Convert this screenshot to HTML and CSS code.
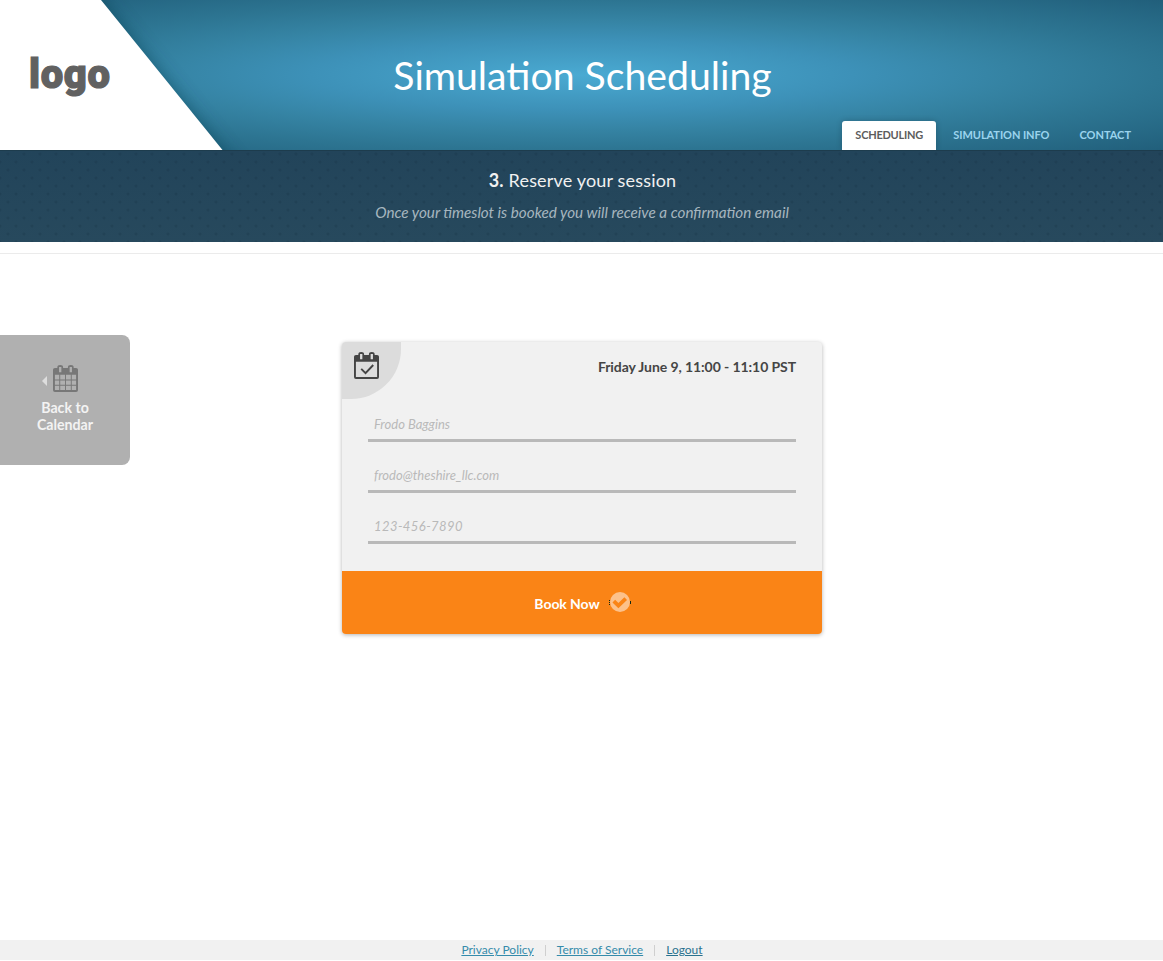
FILE: index.html
```html
<!DOCTYPE html>
<html lang="en">
<head>
<meta charset="utf-8">
<title>Simulation Scheduling</title>
<link rel="stylesheet" href="styles.css">
</head>
<body>
<header class="header">
  <svg class="logo" width="260" height="150" viewBox="0 0 260 150">
    <defs><filter id="shade" x="-20%" y="-20%" width="140%" height="140%"><feGaussianBlur stdDeviation="9"/></filter></defs>
    <path class="logo-shadow" filter="url(#shade)" d="M-40-48H62L258 194H-40z"/>
    <path fill="#fff" d="M0 0H101L222.500 150H0z"/>
    <text class="logo-text" x="29" y="87.500" textLength="81">logo</text>
  </svg>
  <h1 class="title">Simulation Scheduling</h1>
  <nav class="tabs">
    <a class="tab tab-active">SCHEDULING</a>
    <a class="tab tab-info">SIMULATION INFO</a>
    <a class="tab">CONTACT</a>
  </nav>
</header>
<section class="step">
  <h2 class="step-title"><b>3.</b> Reserve your session</h2>
  <p class="step-note">Once your timeslot is booked you will receive a confirmation email</p>
</section>
<main class="main">
  <a class="back">
    <span class="back-icons">
      <svg width="5" height="10" viewBox="0 0 5 10"><path fill="#ddd" d="M5 0v10L0 5z"/></svg>
      <svg width="25" height="27" viewBox="0 0 26 28" preserveAspectRatio="none"><path fill="#777" fill-rule="evenodd" d="M2 3H4.500V2.500Q4.500 0 7.500 0T10.500 2.500V3H15.500V2.500Q15.500 0 18.500 0T21.500 2.500V3H24Q26 3 26 5V26Q26 28 24 28H2Q0 28 0 26V5Q0 3 2 3zM6.300 2V7.500H8.700V2zM17.300 2V7.500H19.700V2zM2 10V15H6.500V10zM7.500 10V15H12.500V10zM13.500 10V15H18.500V10zM19.500 10V15H24V10zM2 16V20.500H6.500V16zM7.500 16V20.500H12.500V16zM13.500 16V20.500H18.500V16zM19.500 16V20.500H24V16zM2 21.500V26H6.500V21.500zM7.500 21.500V26H12.500V21.500zM13.500 21.500V26H18.500V21.500zM19.500 21.500V26H24V21.500z"/></svg>
    </span>
    <span class="back-label">Back to<br>Calendar</span>
  </a>
  <form class="card">
    <div class="card-head">
      <div class="corner">
        <svg width="25" height="27" viewBox="0 0 26 28" preserveAspectRatio="none"><path fill="#444" fill-rule="evenodd" d="M2 3H4.500V2.500Q4.500 0 7.500 0T10.500 2.500V3H15.500V2.500Q15.500 0 18.500 0T21.500 2.500V3H24Q26 3 26 5V26Q26 28 24 28H2Q0 28 0 26V5Q0 3 2 3zM6.300 2V7.500H8.700V2zM17.300 2V7.500H19.700V2zM2 10V26H24V10z"/><path d="M7.500 17.500L12 22L20 13.500" fill="none" stroke="#444" stroke-width="2"/></svg>
      </div>
      <strong class="slot">Friday June 9, 11:00 - 11:10 PST</strong>
    </div>
    <div class="fields">
      <input class="field" type="text" placeholder="Frodo Baggins">
      <input class="field" type="text" placeholder="frodo@theshire_llc.com">
      <input class="field field-phone" type="text" placeholder="123-456-7890">
    </div>
    <button class="book" type="button"><span>Book Now</span>
      <svg class="book-icon" width="22" height="20" viewBox="0 0 22 20"><circle cx="11" cy="10" r="10" fill="#fcc18b"/><path d="M4.800 9.200L9.400 13.700L16.700 6.700" fill="none" stroke="#fa8416" stroke-width="3.800"/><path d="M0 8h1v1H0zM0 10h1v1H0zM0 12h1v1H0zM21 9h1v3h-1z" fill="#152b14"/></svg>
    </button>
  </form>
</main>
<footer class="footer">
  <a class="link">Privacy Policy</a><i class="sep"></i><a class="link">Terms of Service</a><i class="sep"></i><a class="link link-out">Logout</a>
</footer>
</body>
</html>
```
FILE: styles.css
```css
* { box-sizing: border-box; }
body { margin: 0; height: 961px; display: flex; flex-direction: column; background: #fff; font-family: Lato, sans-serif; overflow: hidden; }
.header { position: relative; height: 150px; flex: none; display: flex; justify-content: center; overflow: hidden; background: radial-gradient(ellipse farthest-corner at center, #4aaad2 0%, #3d91b8 33%, #3583a3 52%, #2d7592 70%, #215f7b 100%); }
.logo { position: absolute; left: 0; top: 0; }
.logo-shadow { fill: #0d3a4b; opacity: .55; }
.logo-text { font: 900 40px Roboto, sans-serif; fill: #616161; stroke: #616161; stroke-width: 1.2px; }
.title { margin: 50px 0 0 2px; font-size: 39.2px; line-height: 50px; font-weight: 400; color: #fff; }
.tabs { position: absolute; right: 19px; bottom: 0; display: flex; align-items: flex-end; }
.tab { height: 29px; padding: 0 13px; font-size: 11px; line-height: 28px; font-weight: 700; color: #9bd4ee; }
.tab-active { background: #fff; color: #5c5c5c; border-radius: 3px 3px 0 0; box-shadow: 0 0 6px rgba(0,0,0,.2); letter-spacing: -.25px; width: 94px; white-space: nowrap; }
.tab-info { margin: 0 4px; letter-spacing: -.07px; }
.step { height: 92px; flex: none; border-top: 1px solid #1d3c4d; padding-top: 18px; text-align: center;
  background: radial-gradient(circle at 8px 3px, rgba(22,50,68,.27) 1px, transparent 2px) 0 0 / 16px 16px, radial-gradient(circle at 16px 11px, rgba(22,50,68,.27) 1px, transparent 2px) 0 0 / 16px 16px, radial-gradient(circle at 0 11px, rgba(22,50,68,.27) 1px, transparent 2px) 0 0 / 16px 16px, linear-gradient(#22445a, #27495d); }
.step-title { margin: 0 0 0 2px; font-size: 18px; line-height: 22px; font-weight: 400; color: #f1f1f1; letter-spacing: .17px; }
.step-note { margin: 12px 0 0 1px; font-size: 15.25px; line-height: 18px; font-style: italic; color: #a7b6bf; }
.main { flex: 1; margin-top: 11px; border-top: 1px solid #ebebeb; display: grid; grid-template-columns: 130px 480px; column-gap: 212px; align-items: start; }
.back { height: 130px; margin-top: 81px; padding-top: 30px; border-radius: 0 8px 8px 0; background: #b0b0b0; color: #f3f3f3; display: flex; flex-direction: column; align-items: center; }
.back-icons { display: flex; gap: 6px; align-items: center; margin-right: 10px; }
.back-icons svg:first-child { margin-top: 4px; }
.back-label { margin-top: 7px; font-size: 14.2px; line-height: 17px; font-weight: 700; text-align: center; }
.card { margin-top: 88px; height: 292px; border-radius: 4px; background: #f1f1f1; box-shadow: 0 1px 4px rgba(0,0,0,.3); overflow: hidden; display: flex; flex-direction: column; }
.card-head { display: flex; justify-content: space-between; }
.corner { width: 59px; height: 57px; padding: 10px 0 0 12px; background: #dcdcdc; border-bottom-right-radius: 50px; }
.slot { margin: 16px 26px 0 0; font-size: 14px; line-height: 18px; color: #454545; letter-spacing: -.08px; }
.fields { margin: 10px 26px 0; display: grid; gap: 18px; }
.field { width: 100%; height: 33px; padding: 0 6px 1px; border: 0; border-bottom: 3px solid #b9b9b9; background: none; font: italic 13px Lato, sans-serif; }
.field::placeholder { color: #b9b9b9; opacity: 1; }
.field-phone { letter-spacing: .42px; }
.book { height: 63px; flex: none; margin-top: auto; border: 0; padding: 1px 0 0 1px; background: #fa8416; color: #fff; font: 700 14px Lato, sans-serif; display: flex; align-items: center; justify-content: center; gap: 9px; letter-spacing: -.07px; }
.book span { margin-top: 1px; }
.book-icon { margin-top: -2px; }
.footer { height: 20px; margin-bottom: 1px; flex: none; background: #f1f1f1; display: flex; align-items: center; justify-content: center; font-size: 12px; line-height: 20px; padding-left: 1px; }
.link { color: #358bab; text-decoration: underline; }
.link-out { color: #2a728f; }
.sep { width: 1px; height: 11px; margin: 0 11px; background: #cfcfcf; }
```
